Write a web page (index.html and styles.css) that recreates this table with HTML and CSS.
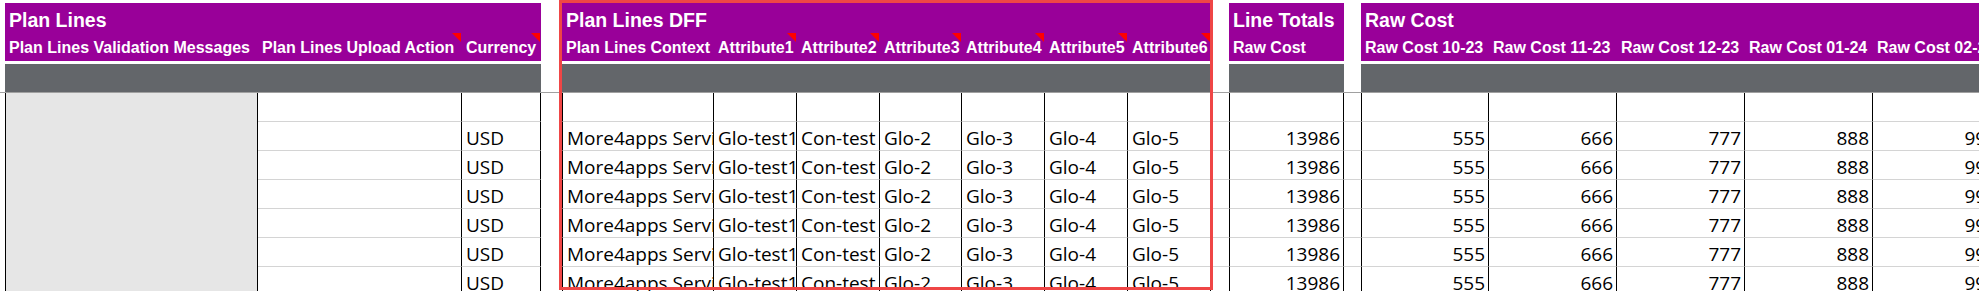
FILE: index.html
```html
<!DOCTYPE html>
<html>
<head>
<meta charset="utf-8">
<link rel="stylesheet" href="styles.css">
</head>
<body>
<div class="sheet">
  <div class="head">
    <div class="m"></div>
    <div class="title span3">Plan Lines</div>
    <div class="m"></div>
    <div class="title span7">Plan Lines DFF</div>
    <div class="m"></div>
    <div class="title">Line Totals</div>
    <div class="m"></div>
    <div class="title span5">Raw Cost</div>

    <div class="m"></div>
    <div class="sub">Plan Lines Validation Messages</div>
    <div class="sub note">Plan Lines Upload Action</div>
    <div class="sub note">Currency</div>
    <div class="m"></div>
    <div class="sub">Plan Lines Context</div>
    <div class="sub note">Attribute1</div>
    <div class="sub note">Attribute2</div>
    <div class="sub note">Attribute3</div>
    <div class="sub note">Attribute4</div>
    <div class="sub note">Attribute5</div>
    <div class="sub note">Attribute6</div>
    <div class="m"></div>
    <div class="sub">Raw Cost</div>
    <div class="m"></div>
    <div class="sub">Raw Cost 10-23</div>
    <div class="sub">Raw Cost 11-23</div>
    <div class="sub">Raw Cost 12-23</div>
    <div class="sub">Raw Cost 01-24</div>
    <div class="sub">Raw Cost 02-24</div>

    <div class="fullrow"></div>

    <div class="m"></div>
    <div class="band span3"></div>
    <div class="m"></div>
    <div class="band span7"></div>
    <div class="m"></div>
    <div class="band"></div>
    <div class="m"></div>
    <div class="band span5"></div>
  </div>

  <div class="body">
    <div class="col-a"></div>

    <!-- row 0 -->
    <div class="m"></div>
    <div class="c"></div><div class="c"></div>
    <div class="m"></div>
    <div class="c first"></div><div class="c"></div><div class="c"></div><div class="c"></div><div class="c"></div><div class="c"></div><div class="c"></div>
    <div class="m gl"></div>
    <div class="c first"></div>
    <div class="m gl"></div>
    <div class="c first"></div><div class="c"></div><div class="c"></div><div class="c"></div><div class="c"></div>

    <!-- row 1 -->
    <div class="m"></div>
    <div class="c"></div><div class="c">USD</div>
    <div class="m"></div>
    <div class="c first">More4apps Services</div><div class="c">Glo-test1</div><div class="c">Con-test</div><div class="c">Glo-2</div><div class="c">Glo-3</div><div class="c">Glo-4</div><div class="c">Glo-5</div>
    <div class="m gl"></div>
    <div class="c first num">13986</div>
    <div class="m gl"></div>
    <div class="c first num">555</div><div class="c num">666</div><div class="c num">777</div><div class="c num">888</div><div class="c num">999</div>

    <!-- row 2 -->
    <div class="m"></div>
    <div class="c"></div><div class="c">USD</div>
    <div class="m"></div>
    <div class="c first">More4apps Services</div><div class="c">Glo-test1</div><div class="c">Con-test</div><div class="c">Glo-2</div><div class="c">Glo-3</div><div class="c">Glo-4</div><div class="c">Glo-5</div>
    <div class="m gl"></div>
    <div class="c first num">13986</div>
    <div class="m gl"></div>
    <div class="c first num">555</div><div class="c num">666</div><div class="c num">777</div><div class="c num">888</div><div class="c num">999</div>

    <!-- row 3 -->
    <div class="m"></div>
    <div class="c"></div><div class="c">USD</div>
    <div class="m"></div>
    <div class="c first">More4apps Services</div><div class="c">Glo-test1</div><div class="c">Con-test</div><div class="c">Glo-2</div><div class="c">Glo-3</div><div class="c">Glo-4</div><div class="c">Glo-5</div>
    <div class="m gl"></div>
    <div class="c first num">13986</div>
    <div class="m gl"></div>
    <div class="c first num">555</div><div class="c num">666</div><div class="c num">777</div><div class="c num">888</div><div class="c num">999</div>

    <!-- row 4 -->
    <div class="m"></div>
    <div class="c"></div><div class="c">USD</div>
    <div class="m"></div>
    <div class="c first">More4apps Services</div><div class="c">Glo-test1</div><div class="c">Con-test</div><div class="c">Glo-2</div><div class="c">Glo-3</div><div class="c">Glo-4</div><div class="c">Glo-5</div>
    <div class="m gl"></div>
    <div class="c first num">13986</div>
    <div class="m gl"></div>
    <div class="c first num">555</div><div class="c num">666</div><div class="c num">777</div><div class="c num">888</div><div class="c num">999</div>

    <!-- row 5 -->
    <div class="m"></div>
    <div class="c"></div><div class="c">USD</div>
    <div class="m"></div>
    <div class="c first">More4apps Services</div><div class="c">Glo-test1</div><div class="c">Con-test</div><div class="c">Glo-2</div><div class="c">Glo-3</div><div class="c">Glo-4</div><div class="c">Glo-5</div>
    <div class="m gl"></div>
    <div class="c first num">13986</div>
    <div class="m gl"></div>
    <div class="c first num">555</div><div class="c num">666</div><div class="c num">777</div><div class="c num">888</div><div class="c num">999</div>

    <!-- row 6 -->
    <div class="m"></div>
    <div class="c"></div><div class="c">USD</div>
    <div class="m"></div>
    <div class="c first">More4apps Services</div><div class="c">Glo-test1</div><div class="c">Con-test</div><div class="c">Glo-2</div><div class="c">Glo-3</div><div class="c">Glo-4</div><div class="c">Glo-5</div>
    <div class="m gl"></div>
    <div class="c first num">13986</div>
    <div class="m gl"></div>
    <div class="c first num">555</div><div class="c num">666</div><div class="c num">777</div><div class="c num">888</div><div class="c num">999</div>
  </div>

  <div class="focus"></div>
</div>
</body>
</html>
```

FILE: styles.css
```css
* { box-sizing: border-box; }

html, body {
  margin: 0;
  padding: 0;
  background: #ffffff;
  overflow: hidden;
}

body {
  width: 1979px;
  height: 291px;
  font-family: "Liberation Sans", Arial, sans-serif;
}

.sheet {
  --cols: 5px 253px 204px 79px 21px 152px 83px 83px 82px 83px 83px 83px 18px 115px 17px 128px 128px 128px 128px 128px;
  position: relative;
  width: 2001px;
  height: 291px;
}

.head {
  display: grid;
  grid-template-columns: var(--cols);
  grid-template-rows: 30px 28px 3px 28px;
  padding-top: 3px;
}

.title {
  background: #990099;
  color: #ffffff;
  font-weight: bold;
  font-size: 19.5px;
  line-height: 22px;
  padding: 6px 0 0 4px;
  white-space: nowrap;
  overflow: hidden;
}

.sub {
  position: relative;
  background: #990099;
  color: #ffffff;
  font-weight: bold;
  font-size: 16px;
  line-height: 18px;
  padding: 6px 0 0 4px;
  white-space: nowrap;
  overflow: hidden;
}

.sub.note::after {
  content: "";
  position: absolute;
  top: 0;
  right: 1px;
  width: 9px;
  height: 9px;
  background: #ff0000;
  clip-path: polygon(0 0, 100% 0, 100% 100%);
}

.span3 { grid-column: span 3; }
.span5 { grid-column: span 5; }
.span7 { grid-column: span 7; }
.fullrow { grid-column: 1 / -1; }

.band { background: #63666a; }

.body {
  display: grid;
  grid-template-columns: var(--cols);
  grid-auto-rows: 29px;
  border-top: 1px solid #a0a0a0;
}

.col-a {
  grid-column: 2;
  grid-row: 1 / span 7;
  background: #e6e6e6;
  border-left: 1px solid #000000;
  border-right: 1px solid #000000;
}

.c {
  display: flex;
  align-items: flex-end;
  padding: 0 4px 1px 4px;
  border-bottom: 1px solid #d4d4d4;
  border-right: 1px solid #000000;
  font-family: "Open Sans", Lato, sans-serif;
  font-size: 19px;
  line-height: 22px;
  color: #000000;
  white-space: nowrap;
  overflow: hidden;
}

.c.first { border-left: 1px solid #000000; }
.c.num { justify-content: flex-end; padding-right: 3px; }

.gl { border-bottom: 1px solid #d4d4d4; }

.focus {
  position: absolute;
  left: 559px;
  top: 0;
  width: 654px;
  height: 290px;
  border: 3px solid #ef4646;
  pointer-events: none;
}
```
